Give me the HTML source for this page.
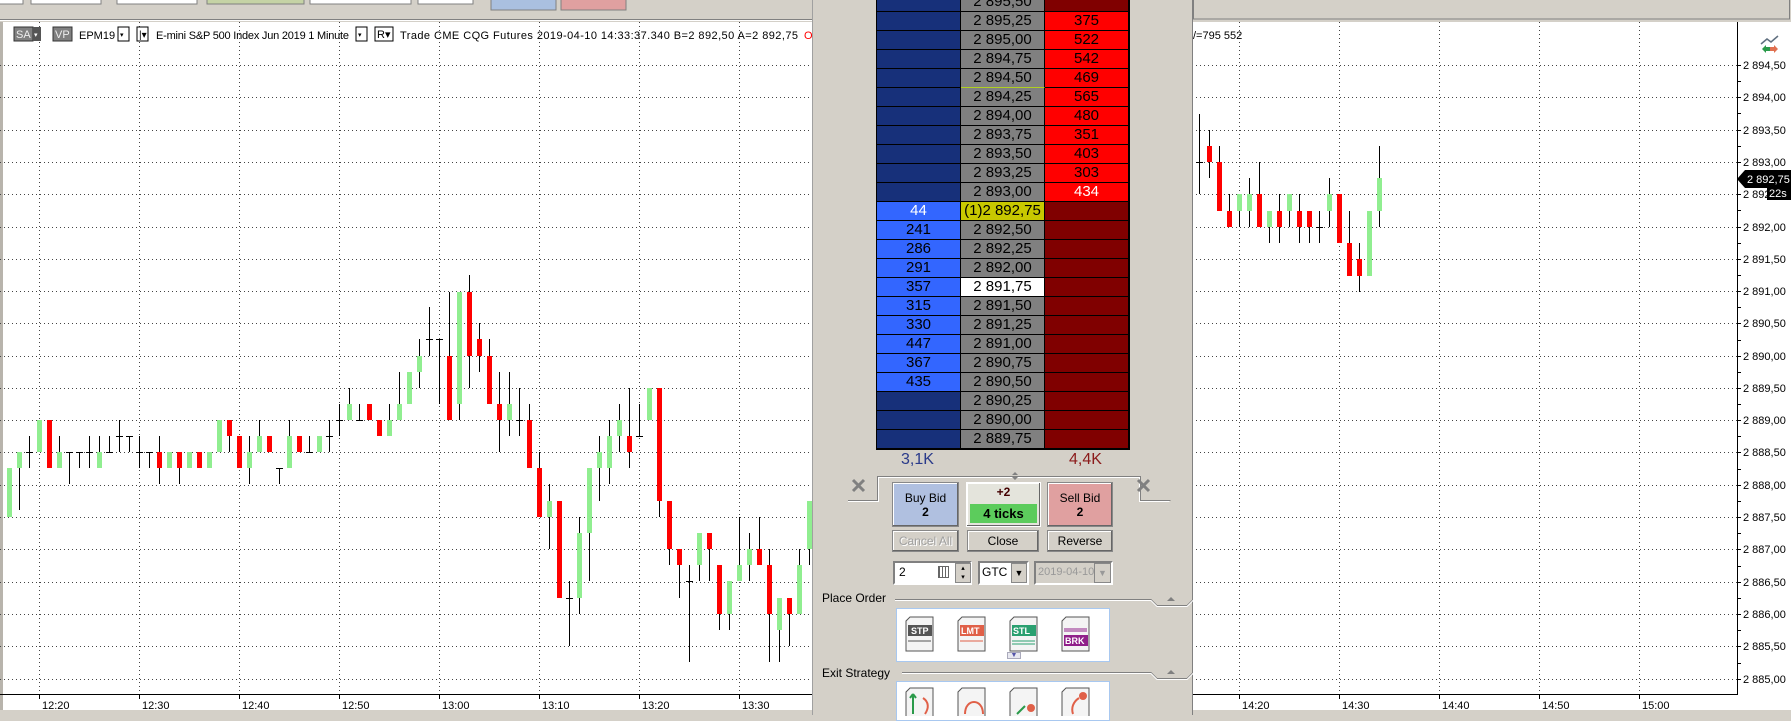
<!DOCTYPE html>
<html><head><meta charset="utf-8"><style>
*{margin:0;padding:0;box-sizing:border-box}
body{width:1791px;height:715px;overflow:hidden;background:#d4d0c8;position:relative;font-family:"Liberation Sans",sans-serif}
.a{position:absolute}
.row{position:absolute;left:877px;width:252px;height:19px;display:flex}
.row div{height:19px;border-right:1px solid #000;border-bottom:1px solid #000;font-size:15px;line-height:18px;text-align:center;color:#000}
.b{width:84px;background:#17307a}.bv{background:#3366ff}
.p{width:84px;background:#808080}
.k{width:84px;background:#800000}.kv{background:#ff0000}
.btn{position:absolute;border:1px solid #888;box-shadow:inset -1px -1px #666,inset 1px 1px #fff;font-size:12px;text-align:center;background:#d4d0c8}
</style></head><body>
<svg class="a" style="left:0;top:0" width="1791" height="715">
<rect x="0" y="22" width="1791" height="690" fill="#fff"/>
<rect x="0" y="22" width="3" height="690" fill="#b8b4ac"/>
<g stroke="#444" stroke-width="1" stroke-dasharray="1 3">
<line x1="0" x2="1737" y1="65.5" y2="65.5"/><line x1="0" x2="1737" y1="97.5" y2="97.5"/><line x1="0" x2="1737" y1="130.5" y2="130.5"/><line x1="0" x2="1737" y1="162.5" y2="162.5"/><line x1="0" x2="1737" y1="194.5" y2="194.5"/><line x1="0" x2="1737" y1="227.5" y2="227.5"/><line x1="0" x2="1737" y1="259.5" y2="259.5"/><line x1="0" x2="1737" y1="291.5" y2="291.5"/><line x1="0" x2="1737" y1="323.5" y2="323.5"/><line x1="0" x2="1737" y1="356.5" y2="356.5"/><line x1="0" x2="1737" y1="388.5" y2="388.5"/><line x1="0" x2="1737" y1="420.5" y2="420.5"/><line x1="0" x2="1737" y1="452.5" y2="452.5"/><line x1="0" x2="1737" y1="485.5" y2="485.5"/><line x1="0" x2="1737" y1="517.5" y2="517.5"/><line x1="0" x2="1737" y1="549.5" y2="549.5"/><line x1="0" x2="1737" y1="582.5" y2="582.5"/><line x1="0" x2="1737" y1="614.5" y2="614.5"/><line x1="0" x2="1737" y1="646.5" y2="646.5"/><line x1="0" x2="1737" y1="679.5" y2="679.5"/>
<line y1="22" y2="694" x1="39.5" x2="39.5"/><line y1="22" y2="694" x1="139.5" x2="139.5"/><line y1="22" y2="694" x1="239.5" x2="239.5"/><line y1="22" y2="694" x1="339.5" x2="339.5"/><line y1="22" y2="694" x1="439.5" x2="439.5"/><line y1="22" y2="694" x1="539.5" x2="539.5"/><line y1="22" y2="694" x1="639.5" x2="639.5"/><line y1="22" y2="694" x1="739.5" x2="739.5"/><line y1="22" y2="694" x1="1239.5" x2="1239.5"/><line y1="22" y2="694" x1="1339.5" x2="1339.5"/><line y1="22" y2="694" x1="1439.5" x2="1439.5"/><line y1="22" y2="694" x1="1539.5" x2="1539.5"/><line y1="22" y2="694" x1="1639.5" x2="1639.5"/>
</g>
<line x1="0" x2="1737" y1="694.5" y2="694.5" stroke="#000"/>
<line x1="1737.5" x2="1737.5" y1="22" y2="695" stroke="#000"/>
<g stroke="#000"><line x1="39.5" x2="39.5" y1="694" y2="699"/><line x1="139.5" x2="139.5" y1="694" y2="699"/><line x1="239.5" x2="239.5" y1="694" y2="699"/><line x1="339.5" x2="339.5" y1="694" y2="699"/><line x1="439.5" x2="439.5" y1="694" y2="699"/><line x1="539.5" x2="539.5" y1="694" y2="699"/><line x1="639.5" x2="639.5" y1="694" y2="699"/><line x1="739.5" x2="739.5" y1="694" y2="699"/><line x1="1239.5" x2="1239.5" y1="694" y2="699"/><line x1="1339.5" x2="1339.5" y1="694" y2="699"/><line x1="1439.5" x2="1439.5" y1="694" y2="699"/><line x1="1539.5" x2="1539.5" y1="694" y2="699"/><line x1="1639.5" x2="1639.5" y1="694" y2="699"/></g>
<g font-size="11" fill="#000" font-family="Liberation Sans"><text x="42" y="709">12:20</text><text x="142" y="709">12:30</text><text x="242" y="709">12:40</text><text x="342" y="709">12:50</text><text x="442" y="709">13:00</text><text x="542" y="709">13:10</text><text x="642" y="709">13:20</text><text x="742" y="709">13:30</text><text x="1242" y="709">14:20</text><text x="1342" y="709">14:30</text><text x="1442" y="709">14:40</text><text x="1542" y="709">14:50</text><text x="1642" y="709">15:00</text></g>
<rect x="0" y="710" width="1791" height="5" fill="#d4d0c8"/>
<g font-size="11" fill="#000" font-family="Liberation Sans">
<text x="1743" y="69">2 894,50</text><text x="1743" y="101">2 894,00</text><text x="1743" y="134">2 893,50</text><text x="1743" y="166">2 893,00</text><text x="1743" y="231">2 892,00</text><text x="1743" y="263">2 891,50</text><text x="1743" y="295">2 891,00</text><text x="1743" y="327">2 890,50</text><text x="1743" y="360">2 890,00</text><text x="1743" y="392">2 889,50</text><text x="1743" y="424">2 889,00</text><text x="1743" y="456">2 888,50</text><text x="1743" y="489">2 888,00</text><text x="1743" y="521">2 887,50</text><text x="1743" y="553">2 887,00</text><text x="1743" y="586">2 886,50</text><text x="1743" y="618">2 886,00</text><text x="1743" y="650">2 885,50</text><text x="1743" y="683">2 885,00</text><text x="1743" y="198">2 892,50</text>
</g>
<g stroke="#000"><path d="M1737 81.5h4M1737 113.5h4M1737 146.5h4M1737 178.5h4M1737 210.5h4M1737 243.5h4M1737 275.5h4M1737 307.5h4M1737 340.5h4M1737 372.5h4M1737 404.5h4M1737 436.5h4M1737 469.5h4M1737 501.5h4M1737 533.5h4M1737 566.5h4M1737 598.5h4M1737 630.5h4M1737 663.5h4M1737 65.5h4M1737 97.5h4M1737 130.5h4M1737 162.5h4M1737 194.5h4M1737 227.5h4M1737 259.5h4M1737 291.5h4M1737 323.5h4M1737 356.5h4M1737 388.5h4M1737 420.5h4M1737 452.5h4M1737 485.5h4M1737 517.5h4M1737 549.5h4M1737 582.5h4M1737 614.5h4M1737 646.5h4M1737 679.5h4"/></g>
<path d="M1737 179 l8 -9 h46 v18 h-46z" fill="#000"/><text x="1747" y="183" font-size="11" fill="#fff">2 892,75</text>
<rect x="1767" y="187" width="24" height="13" fill="#000"/><text x="1769" y="197" font-size="11" fill="#fff">22s</text>
<path d="M1761 44l6-5 4 3 7-6" stroke="#607080" stroke-width="1.5" fill="none"/><path d="M1762 49l4-4v2h4v4h-4v2z" fill="#2a9a4a"/><path d="M1778 49l-4-4v2h-4v4h4v2z" fill="#e07050"/>
<g fill="#000">
<rect x="9" y="468" width="1" height="49"/><rect x="19" y="452" width="1" height="58"/><rect x="29" y="436" width="1" height="32"/><rect x="59" y="436" width="1" height="32"/><rect x="69" y="452" width="1" height="32"/><rect x="79" y="452" width="1" height="16"/><rect x="89" y="436" width="1" height="32"/><rect x="99" y="436" width="1" height="32"/><rect x="109" y="436" width="1" height="16"/><rect x="119" y="420" width="1" height="32"/><rect x="129" y="436" width="1" height="16"/><rect x="139" y="436" width="1" height="32"/><rect x="149" y="452" width="1" height="16"/><rect x="159" y="436" width="1" height="48"/><rect x="179" y="452" width="1" height="32"/><rect x="229" y="420" width="1" height="32"/><rect x="249" y="436" width="1" height="48"/><rect x="259" y="420" width="1" height="32"/><rect x="279" y="468" width="1" height="16"/><rect x="289" y="420" width="1" height="48"/><rect x="309" y="436" width="1" height="16"/><rect x="329" y="420" width="1" height="32"/><rect x="339" y="404" width="1" height="32"/><rect x="349" y="388" width="1" height="32"/><rect x="359" y="404" width="1" height="16"/><rect x="389" y="404" width="1" height="32"/><rect x="399" y="372" width="1" height="48"/><rect x="419" y="339" width="1" height="49"/><rect x="429" y="307" width="1" height="49"/><rect x="439" y="339" width="1" height="65"/><rect x="449" y="292" width="1" height="128"/><rect x="459" y="292" width="1" height="128"/><rect x="469" y="275" width="1" height="113"/><rect x="479" y="323" width="1" height="49"/><rect x="489" y="339" width="1" height="65"/><rect x="499" y="372" width="1" height="80"/><rect x="509" y="372" width="1" height="64"/><rect x="519" y="388" width="1" height="48"/><rect x="529" y="404" width="1" height="64"/><rect x="539" y="452" width="1" height="65"/><rect x="549" y="484" width="1" height="65"/><rect x="569" y="581" width="1" height="65"/><rect x="579" y="517" width="1" height="97"/><rect x="589" y="468" width="1" height="113"/><rect x="599" y="436" width="1" height="65"/><rect x="609" y="420" width="1" height="64"/><rect x="619" y="404" width="1" height="48"/><rect x="629" y="388" width="1" height="80"/><rect x="639" y="404" width="1" height="32"/><rect x="659" y="388" width="1" height="129"/><rect x="669" y="501" width="1" height="64"/><rect x="679" y="549" width="1" height="49"/><rect x="689" y="565" width="1" height="97"/><rect x="699" y="533" width="1" height="48"/><rect x="709" y="533" width="1" height="48"/><rect x="719" y="565" width="1" height="65"/><rect x="729" y="581" width="1" height="49"/><rect x="739" y="517" width="1" height="64"/><rect x="749" y="533" width="1" height="48"/><rect x="759" y="517" width="1" height="48"/><rect x="769" y="549" width="1" height="113"/><rect x="779" y="598" width="1" height="64"/><rect x="789" y="598" width="1" height="48"/><rect x="799" y="549" width="1" height="65"/><rect x="809" y="501" width="1" height="64"/>
<rect x="26" y="452" width="7" height="1"/><rect x="66" y="452" width="7" height="1"/><rect x="76" y="452" width="7" height="1"/><rect x="86" y="452" width="7" height="1"/><rect x="106" y="452" width="7" height="1"/><rect x="116" y="436" width="7" height="1"/><rect x="126" y="436" width="7" height="1"/><rect x="136" y="452" width="7" height="1"/><rect x="146" y="452" width="7" height="1"/><rect x="276" y="468" width="7" height="1"/><rect x="306" y="452" width="7" height="1"/><rect x="326" y="436" width="7" height="1"/><rect x="336" y="420" width="7" height="1"/><rect x="356" y="420" width="7" height="1"/><rect x="426" y="339" width="7" height="1"/><rect x="436" y="339" width="7" height="1"/><rect x="516" y="420" width="7" height="1"/><rect x="566" y="598" width="7" height="1"/><rect x="636" y="436" width="7" height="1"/><rect x="686" y="581" width="7" height="1"/>
</g>
<g fill="#90ee90"><rect x="7" y="468" width="5" height="49"/><rect x="17" y="452" width="5" height="16"/><rect x="37" y="420" width="5" height="32"/><rect x="57" y="452" width="5" height="16"/><rect x="97" y="452" width="5" height="16"/><rect x="167" y="452" width="5" height="16"/><rect x="187" y="452" width="5" height="16"/><rect x="207" y="452" width="5" height="16"/><rect x="217" y="420" width="5" height="32"/><rect x="247" y="452" width="5" height="16"/><rect x="257" y="436" width="5" height="16"/><rect x="287" y="436" width="5" height="32"/><rect x="317" y="436" width="5" height="16"/><rect x="347" y="404" width="5" height="16"/><rect x="387" y="420" width="5" height="16"/><rect x="397" y="404" width="5" height="16"/><rect x="407" y="372" width="5" height="32"/><rect x="417" y="356" width="5" height="16"/><rect x="457" y="292" width="5" height="112"/><rect x="507" y="404" width="5" height="16"/><rect x="547" y="501" width="5" height="16"/><rect x="577" y="533" width="5" height="65"/><rect x="587" y="468" width="5" height="65"/><rect x="597" y="452" width="5" height="16"/><rect x="607" y="436" width="5" height="32"/><rect x="617" y="420" width="5" height="16"/><rect x="647" y="388" width="5" height="32"/><rect x="697" y="533" width="5" height="32"/><rect x="727" y="581" width="5" height="33"/><rect x="737" y="565" width="5" height="16"/><rect x="747" y="549" width="5" height="16"/><rect x="777" y="598" width="5" height="32"/><rect x="797" y="565" width="5" height="49"/><rect x="807" y="501" width="5" height="48"/></g>
<g fill="#ff0000"><rect x="47" y="420" width="5" height="48"/><rect x="157" y="452" width="5" height="16"/><rect x="177" y="452" width="5" height="16"/><rect x="197" y="452" width="5" height="16"/><rect x="227" y="420" width="5" height="16"/><rect x="237" y="436" width="5" height="32"/><rect x="267" y="436" width="5" height="16"/><rect x="297" y="436" width="5" height="16"/><rect x="367" y="404" width="5" height="16"/><rect x="377" y="420" width="5" height="16"/><rect x="447" y="356" width="5" height="64"/><rect x="467" y="292" width="5" height="64"/><rect x="477" y="339" width="5" height="17"/><rect x="487" y="356" width="5" height="48"/><rect x="497" y="404" width="5" height="16"/><rect x="527" y="420" width="5" height="48"/><rect x="537" y="468" width="5" height="49"/><rect x="557" y="501" width="5" height="97"/><rect x="627" y="436" width="5" height="16"/><rect x="657" y="388" width="5" height="113"/><rect x="667" y="501" width="5" height="48"/><rect x="677" y="549" width="5" height="16"/><rect x="707" y="533" width="5" height="16"/><rect x="717" y="565" width="5" height="49"/><rect x="757" y="549" width="5" height="16"/><rect x="767" y="565" width="5" height="49"/><rect x="787" y="598" width="5" height="16"/></g>
<g fill="#000"><rect x="1199" y="114" width="1" height="80"/><rect x="1196" y="162" width="7" height="1"/><rect x="1209" y="130" width="1" height="48"/><rect x="1219" y="146" width="1" height="65"/><rect x="1229" y="194" width="1" height="33"/><rect x="1239" y="194" width="1" height="33"/><rect x="1249" y="178" width="1" height="49"/><rect x="1259" y="162" width="1" height="65"/><rect x="1269" y="211" width="1" height="32"/><rect x="1279" y="194" width="1" height="49"/><rect x="1289" y="194" width="1" height="33"/><rect x="1299" y="194" width="1" height="49"/><rect x="1309" y="211" width="1" height="32"/><rect x="1319" y="211" width="1" height="32"/><rect x="1316" y="227" width="7" height="1"/><rect x="1329" y="178" width="1" height="49"/><rect x="1349" y="211" width="1" height="65"/><rect x="1359" y="243" width="1" height="49"/><rect x="1379" y="146" width="1" height="81"/></g>
<g fill="#ff0000"><rect x="1207" y="146" width="5" height="16"/><rect x="1217" y="162" width="5" height="49"/><rect x="1227" y="211" width="5" height="16"/><rect x="1257" y="194" width="5" height="33"/><rect x="1277" y="211" width="5" height="16"/><rect x="1297" y="211" width="5" height="16"/><rect x="1307" y="211" width="5" height="16"/><rect x="1337" y="194" width="5" height="49"/><rect x="1347" y="243" width="5" height="33"/><rect x="1357" y="259" width="5" height="17"/></g>
<g fill="#90ee90"><rect x="1237" y="194" width="5" height="17"/><rect x="1247" y="194" width="5" height="17"/><rect x="1267" y="211" width="5" height="16"/><rect x="1287" y="194" width="5" height="17"/><rect x="1327" y="194" width="5" height="17"/><rect x="1367" y="211" width="5" height="65"/><rect x="1377" y="178" width="5" height="33"/></g>
<rect x="14" y="27" width="19" height="14" fill="#808080" stroke="#333"/><rect x="33" y="27" width="8" height="14" fill="#555"/><text x="16" y="38" font-size="11" fill="#eee">SA</text><text x="34" y="37" font-size="7" fill="#fff">▾</text>
<rect x="53" y="27" width="19" height="14" fill="#808080" stroke="#333"/><text x="55" y="38" font-size="11" fill="#eee">VP</text>
<rect x="118" y="27" width="11" height="14" fill="#fff" stroke="#000"/><text x="120" y="37" font-size="7">▾</text>
<rect x="137" y="27" width="11" height="14" fill="#fff" stroke="#000"/><text x="139" y="38" font-size="10">|▾</text>
<rect x="356" y="27" width="11" height="14" fill="#fff" stroke="#000"/><text x="358" y="37" font-size="7">▾</text>
<rect x="375" y="27" width="18" height="14" fill="#fff" stroke="#000"/><text x="377" y="38" font-size="11">R▾</text>
<text x="79" y="39" font-size="11" fill="#000">EPM19</text>
<text x="156" y="39" font-size="11" fill="#000" textLength="193">E-mini S&amp;P 500 Index Jun 2019  1 Minute</text>
<text x="400" y="39" font-size="11" fill="#000" textLength="398">Trade  CME  CQG  Futures  2019-04-10  14:33:37.340  B=2 892,50  A=2 892,75</text>
<text x="804" y="39" font-size="11" fill="#f00">O=2 8</text>
<text x="1193" y="39" font-size="11" fill="#000">/=795 552</text>
<g fill="#fff" stroke="#808080"><rect x="-1" y="-2" width="24" height="6"/><rect x="31" y="-2" width="70" height="6"/><rect x="117" y="-2" width="80" height="6"/><rect x="310" y="-2" width="101" height="6"/><rect x="418" y="-2" width="55" height="6"/></g>
<rect x="207" y="-2" width="97" height="6" fill="#c5d3a5" stroke="#808080"/>
<rect x="491" y="-2" width="65" height="12" fill="#aac0e0" stroke="#808080"/><rect x="561" y="-2" width="65" height="12" fill="#e0a0a0" stroke="#808080"/>
<line x1="0" x2="812" y1="19.5" y2="19.5" stroke="#808080"/><line x1="0" x2="812" y1="20.5" y2="20.5" stroke="#fff"/>
<rect x="1193.5" y="-2" width="596" height="21" fill="none" stroke="#808080"/>
</svg>

<div class="a" style="left:812px;top:0;width:381px;height:715px;background:#d4d0c8;border-left:1px solid #a0a0a0;border-right:1px solid #808080"></div>
<div class="a" style="left:876px;top:-7px;width:254px;height:457px;background:#000"></div>
<div class="row" style="top:-7px"><div class="b"></div><div class="p">2 895,50</div><div class="k"></div></div>
<div class="row" style="top:12px"><div class="b"></div><div class="p">2 895,25</div><div class="k kv">375</div></div>
<div class="row" style="top:31px"><div class="b"></div><div class="p">2 895,00</div><div class="k kv">522</div></div>
<div class="row" style="top:50px"><div class="b"></div><div class="p">2 894,75</div><div class="k kv">542</div></div>
<div class="row" style="top:69px"><div class="b"></div><div class="p" style="border-bottom-color:#b0d020">2 894,50</div><div class="k kv">469</div></div>
<div class="row" style="top:88px"><div class="b"></div><div class="p">2 894,25</div><div class="k kv">565</div></div>
<div class="row" style="top:107px"><div class="b"></div><div class="p">2 894,00</div><div class="k kv">480</div></div>
<div class="row" style="top:126px"><div class="b"></div><div class="p">2 893,75</div><div class="k kv">351</div></div>
<div class="row" style="top:145px"><div class="b"></div><div class="p">2 893,50</div><div class="k kv">403</div></div>
<div class="row" style="top:164px"><div class="b"></div><div class="p">2 893,25</div><div class="k kv">303</div></div>
<div class="row" style="top:183px"><div class="b"></div><div class="p">2 893,00</div><div class="k kv" style="color:#fff">434</div></div>
<div class="row" style="top:202px"><div class="b bv" style="color:#fff">44</div><div class="p" style="background:#c8c800">(1)2 892,75</div><div class="k"></div></div>
<div class="row" style="top:221px"><div class="b bv">241</div><div class="p">2 892,50</div><div class="k"></div></div>
<div class="row" style="top:240px"><div class="b bv">286</div><div class="p">2 892,25</div><div class="k"></div></div>
<div class="row" style="top:259px"><div class="b bv">291</div><div class="p">2 892,00</div><div class="k"></div></div>
<div class="row" style="top:278px"><div class="b bv">357</div><div class="p" style="background:#fff">2 891,75</div><div class="k"></div></div>
<div class="row" style="top:297px"><div class="b bv">315</div><div class="p">2 891,50</div><div class="k"></div></div>
<div class="row" style="top:316px"><div class="b bv">330</div><div class="p">2 891,25</div><div class="k"></div></div>
<div class="row" style="top:335px"><div class="b bv">447</div><div class="p">2 891,00</div><div class="k"></div></div>
<div class="row" style="top:354px"><div class="b bv">367</div><div class="p">2 890,75</div><div class="k"></div></div>
<div class="row" style="top:373px"><div class="b bv">435</div><div class="p">2 890,50</div><div class="k"></div></div>
<div class="row" style="top:392px"><div class="b"></div><div class="p">2 890,25</div><div class="k"></div></div>
<div class="row" style="top:411px"><div class="b"></div><div class="p">2 890,00</div><div class="k"></div></div>
<div class="row" style="top:430px"><div class="b"></div><div class="p">2 889,75</div><div class="k"></div></div>
<div class="a" style="left:901px;top:451px;font-size:16px;color:#2a3a8a">3,1K</div>
<div class="a" style="left:1069px;top:451px;font-size:16px;color:#8b1a1a">4,4K</div>
<svg class="a" style="left:812px;top:468px" width="381" height="247">
<path d="M36 32.5h29.5v-24h263v24h30" fill="none" stroke="#808080"/><path d="M36 33.5h30.5v-24h261v24h30" fill="none" stroke="#fff"/>
<path d="M41 12l11 11M52 12l-11 11M326 12l11 11M337 12l-11 11" stroke="#808080" stroke-width="3"/>
<path d="M200 7l3-3 3 3zM200 9l3 3 3-3z" fill="#808080"/>
<path d="M83 131.5h256l6 6h30l6-6h13" fill="none" stroke="#808080"/><path d="M83 132.5h256l6 6h30l6-6h13" fill="none" stroke="#fff"/>
<path d="M355 133l4-4 4 4z" fill="#808080"/>
<path d="M90 204.5h249l6 6h30l6-6h13" fill="none" stroke="#808080"/><path d="M90 205.5h249l6 6h30l6-6h13" fill="none" stroke="#fff"/>
<path d="M355 206l4-4 4 4z" fill="#808080"/>
</svg>
<div class="btn" style="left:892px;top:482px;width:67px;height:45px;background:#b0c0e0;padding-top:8px">Buy Bid<br><b>2</b></div>
<div class="btn" style="left:966px;top:482px;width:75px;height:45px;background:#e4e4dc;border-color:#fff"><div style="color:#400;font-weight:bold;margin-top:2px">+2</div><div style="position:absolute;left:3px;top:21px;width:67px;height:19px;background:#5ccc5c;font-weight:bold;font-size:13px;line-height:19px">4 ticks</div></div>
<div class="btn" style="left:1047px;top:482px;width:66px;height:45px;background:#e0a0a0;padding-top:8px">Sell Bid<br><b>2</b></div>
<div class="btn" style="left:892px;top:530px;width:67px;height:22px;line-height:20px;color:#a0a0a0;text-shadow:1px 1px #fff">Cancel All</div>
<div class="btn" style="left:967px;top:530px;width:72px;height:22px;line-height:20px">Close</div>
<div class="btn" style="left:1047px;top:530px;width:66px;height:22px;line-height:20px">Reverse</div>
<div class="a" style="left:893px;top:561px;width:79px;height:24px;background:#fff;border:2px solid #808080;border-right-color:#fff;border-bottom-color:#fff;font-size:12px;padding:2px 4px">2</div>
<div class="a" style="left:938px;top:566px;width:11px;height:12px;border:1px solid #666;background:repeating-linear-gradient(90deg,#666 0 1px,transparent 1px 3px)"></div>
<div class="a" style="left:955px;top:563px;width:16px;height:20px;background:#d4d0c8;border:1px solid #888;font-size:7px;text-align:center;line-height:9px">▴<br>▾</div>
<div class="a" style="left:978px;top:561px;width:51px;height:24px;background:#fff;border:2px solid #808080;border-right-color:#fff;border-bottom-color:#fff;font-size:12px;padding:2px 2px">GTC</div>
<div class="a" style="left:1011px;top:563px;width:16px;height:20px;background:#d4d0c8;border:1px solid #888;font-size:9px;text-align:center;line-height:18px">▼</div>
<div class="a" style="left:1034px;top:561px;width:79px;height:24px;background:#d4d0c8;border:2px solid #808080;border-right-color:#fff;border-bottom-color:#fff;font-size:11px;padding:3px 2px;color:#999">2019-04-10</div>
<div class="a" style="left:1094px;top:563px;width:17px;height:20px;border:1px solid #888;font-size:9px;text-align:center;line-height:18px;color:#999;background:#d4d0c8">▼</div>
<div class="a" style="left:822px;top:591px;font-size:12px">Place Order</div>
<div class="a" style="left:822px;top:666px;font-size:12px">Exit Strategy</div>
<div class="a" style="left:896px;top:608px;width:214px;height:54px;background:#fff;border:1px solid #a8c8f0"></div>
<div class="a" style="left:1007px;top:652px;width:14px;height:7px;background:#e8e8f0;border:1px solid #aab;font-size:7px;line-height:6px;text-align:center;color:#55a">▼</div>
<svg class="a" style="left:905px;top:615px" width="200" height="40" font-family="Liberation Sans" font-weight="bold" font-size="9">
<g fill="#f4f4f4" stroke="#555"><path d="M5 2h23v34h-27v-30z"/><path d="M57 2h23v34h-27v-30z"/><path d="M109 2h23v34h-27v-30z"/><path d="M161 2h23v34h-27v-30z"/></g>
<rect x="3" y="10" width="24" height="11" fill="#555"/><text x="6" y="19" fill="#fff">STP</text>
<rect x="55" y="10" width="24" height="11" fill="#e06048"/><text x="56" y="19" fill="#fff">LMT</text>
<rect x="107" y="10" width="24" height="11" fill="#2aa070"/><text x="108" y="19" fill="#fff">STL</text>
<rect x="159" y="20" width="24" height="11" fill="#90208a"/><text x="160" y="29" fill="#fff">BRK</text>
<path d="M159 14h23M159 16h23" stroke="#90208a"/><path d="M107 26h23M107 29h23" stroke="#2aa070"/><path d="M55 26h23" stroke="#e06048"/><path d="M3 26h23" stroke="#555"/>
</svg>
<div class="a" style="left:896px;top:681px;width:214px;height:40px;background:#fff;border:1px solid #a8c8f0"></div>
<svg class="a" style="left:905px;top:686px" width="200" height="30">
<g fill="#f4f4f4" stroke="#555"><path d="M5 2h23v30h-27v-26z"/><path d="M57 2h23v30h-27v-26z"/><path d="M109 2h23v30h-27v-26z"/><path d="M161 2h23v30h-27v-26z"/></g>
<path d="M8 28v-20M8 8l-3 4M8 8l3 4" stroke="#2a9a4a" fill="none" stroke-width="2"/><path d="M18 12c6 4 6 10 2 16" stroke="#e06048" fill="none" stroke-width="2"/>
<path d="M60 28c0-16 18-16 18 0" stroke="#e06048" fill="none" stroke-width="2"/><path d="M120 20l-8 8" stroke="#2a9a4a" stroke-width="2"/><circle cx="126" cy="22" r="4" fill="#e06048"/>
<circle cx="178" cy="10" r="4" fill="#e06048"/><path d="M174 12c-6 4-8 10-6 16" stroke="#e06048" fill="none" stroke-width="2"/>
</svg>
</body></html>
